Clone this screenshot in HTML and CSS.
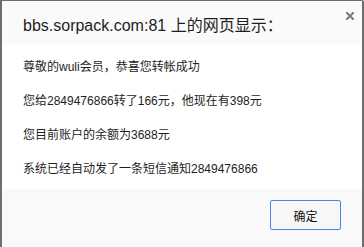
FILE: index.html
```html
<!DOCTYPE html>
<html>
<head>
<meta charset="utf-8">
<link rel="stylesheet" href="styles.css">
</head>
<body>
<div class="dialog">
  <div class="header">
    <div class="title">bbs.sorpack.com:81 上的网页显示：</div>
    <svg class="close" width="8" height="8" viewBox="0 0 8 8"><path d="M1 1 L7 7 M7 1 L1 7" stroke="#7a7a7a" stroke-width="2" stroke-linecap="square"/></svg>
  </div>
  <div class="content">
    <p class="line">尊敬的wuli会员，恭喜您转帐成功</p>
    <p class="line">您给2849476866转了166元，他现在有398元</p>
    <p class="line">您目前账户的余额为3688元</p>
    <p class="line">系统已经自动发了一条短信通知2849476866</p>
  </div>
  <div class="footer">
    <button class="ok">确定</button>
  </div>
</div>
</body>
</html>
```

FILE: styles.css
```css
html, body {
  margin: 0;
  padding: 0;
  background: #ffffff;
}
body {
  font-family: "Liberation Sans", "Noto Sans CJK SC", sans-serif;
  color: #222;
}
.dialog {
  width: 364px;
  height: 247px;
  box-sizing: border-box;
  border-top: 1px solid #6e6e6e;
  border-left: 2px solid #6e6e6e;
  border-right: 2px solid #6e6e6e;
  border-top-right-radius: 2px;
  display: flex;
  flex-direction: column;
  background: #fff;
}
.header {
  height: 43px;
  background: #fafafa;
  display: flex;
  align-items: flex-start;
  padding-left: 21px;
  padding-right: 8px;
}
.title {
  font-size: 16px;
  line-height: 16px;
  margin-top: 17px;
  color: #1e1e1e;
}
.close {
  margin-left: auto;
  margin-top: 11px;
}
.content {
  padding: 6px 21px 3px 21px;
  flex: none;
}
.line {
  margin: 0;
  font-size: 12px;
  line-height: 34px;
  height: 34px;
  white-space: nowrap;
  color: #1e1e1e;
}
.footer {
  flex: 1;
  background: #f9f9f9;
  display: flex;
  justify-content: flex-end;
  align-items: flex-start;
  padding: 11px 21px 0 0;
}
.ok {
  width: 71px;
  height: 30px;
  border: 1px solid #4a86e8;
  border-radius: 2px;
  background: #f7f7f7;
  font-family: "Liberation Sans", "Noto Sans CJK SC", sans-serif;
  font-size: 12px;
  color: #111;
  padding: 0;
}
```
